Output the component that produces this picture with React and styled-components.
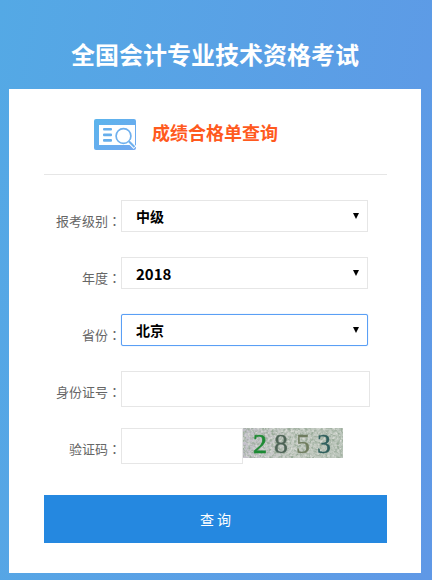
import React from 'react'
import styled, { createGlobalStyle } from 'styled-components'

const GlobalStyle = createGlobalStyle`
  html, body {
    margin: 0;
    padding: 0;
  }
  body {
    font-family: "Noto Sans CJK SC", "Liberation Sans", sans-serif;
  }
`

const Page = styled.div`
  width: 432px;
  height: 580px;
  overflow: hidden;
  background: linear-gradient(100deg, #54a9e5 0%, #5f98e6 100%);
`

const Title = styled.h1`
  margin: 0;
  height: 89px;
  padding: 18px 2px 0 0;
  box-sizing: border-box;
  display: flex;
  align-items: center;
  justify-content: center;
  color: #fff;
  font-size: 24px;
  font-weight: 700;
`

const Card = styled.div`
  margin: 0 11px 0 9px;
  height: 484px;
  padding: 0 34px 0 35px;
  box-sizing: border-box;
  background: #fff;
`

const CardHead = styled.div`
  height: 86px;
  box-sizing: border-box;
  padding: 30px 0 0 50px;
  display: flex;
  align-items: flex-start;
  gap: 16px;
  border-bottom: 1px solid #e6e6e6;
`

const HeadText = styled.h2`
  margin: 0;
  color: #ff5a1e;
  font-size: 18px;
  font-weight: 700;
  line-height: 26px;
`

const Row = styled.div`
  display: flex;
  align-items: flex-start;
  margin-top: ${({ $top }) => $top}px;
`

const Label = styled.label`
  width: 77px;
  flex: none;
  padding: 12px 0 0;
  box-sizing: border-box;
  color: #666;
  font-size: 13px;
  line-height: 18px;
  text-align: right;
  white-space: nowrap;
`

// the colon sits in the middle of its cell in the reference, as in the TC font
const Colon = styled.span`
  font-family: "Noto Sans CJK TC", sans-serif;
`

const SelectWrap = styled.div`
  position: relative;
  width: 247px;
  height: 32px;

  &::after {
    content: '';
    position: absolute;
    right: 9px;
    top: 13px;
    border-left: 3px solid transparent;
    border-right: 3px solid transparent;
    border-top: 6px solid #000;
  }
`

const Select = styled.select`
  appearance: none;
  display: block;
  width: 100%;
  height: 100%;
  margin: 0;
  padding: 0 0 0 14px;
  box-sizing: border-box;
  background: #fff;
  color: #000;
  font-family: inherit;
  font-size: ${({ $size }) => $size}px;
  font-weight: 700;
  outline: none;
  border: 1px solid ${({ $active }) => ($active ? '#5a9ff5' : '#e6e6e6')};
  border-radius: ${({ $active }) => ($active ? '2px' : '0')};
  box-shadow: ${({ $active }) => ($active ? '0 0 1px rgba(90, 159, 245, 0.7)' : 'none')};
`

const Input = styled.input`
  display: block;
  width: ${({ $width }) => $width}px;
  height: 36px;
  margin: 0;
  padding: 0 10px;
  box-sizing: border-box;
  background: #fff;
  border: 1px solid #e6e6e6;
  outline: none;
  font-family: inherit;
  font-size: 14px;
`

const Captcha = styled.svg`
  display: block;
  flex: none;
  width: 100px;
  height: 30px;
`

const SubmitButton = styled.button`
  display: block;
  width: 343px;
  height: 48px;
  margin: 31px 0 0;
  padding: 0;
  border: 0;
  background: #2588e0;
  color: #fff;
  font-family: inherit;
  font-size: 14px;
`

const ReportIcon = () => (
  <svg width="42" height="31" viewBox="0 0 42 31" style={{ flex: 'none' }}>
    <defs>
      <linearGradient id="iconFill" x1="0" y1="0" x2="1" y2="1">
        <stop offset="0" stopColor="#5ab4ec" />
        <stop offset="1" stopColor="#72a8f0" />
      </linearGradient>
    </defs>
    <rect x="0" y="0" width="42" height="31" rx="2" fill="url(#iconFill)" />
    <rect x="5" y="6" width="36" height="20" fill="#fff" />
    <rect x="9" y="9" width="9" height="2.6" rx="1" fill="#66aeec" />
    <rect x="9" y="14.6" width="9" height="2.6" rx="1" fill="#66aeec" />
    <rect x="9" y="20" width="9" height="2.8" rx="1" fill="#66aeec" />
    <circle cx="29.5" cy="17" r="7.4" fill="#fff" stroke="#6fb0ee" strokeWidth="1.7" />
    <path d="M35 22.5 L41 28.5" stroke="#fff" strokeWidth="4" />
    <path d="M34.8 22.3 L40.5 28" stroke="#6fb0ee" strokeWidth="2" />
  </svg>
)

const digits = [
  { ch: '2', x: 10, fill: '#1f8a34', stroke: 0.7 },
  { ch: '8', x: 31, fill: '#4d6355', stroke: 0.3 },
  { ch: '5', x: 53, fill: '#6f7c5e', stroke: 0.3 },
  { ch: '3', x: 74, fill: '#2f5f5c', stroke: 0.4 },
]

const CaptchaImage = () => (
  <Captcha viewBox="0 0 100 30">
    <defs>
      <filter id="darkGrain" x="0" y="0" width="100%" height="100%" colorInterpolationFilters="sRGB">
        <feTurbulence type="fractalNoise" baseFrequency="0.35" numOctaves="2" seed="7" />
        <feColorMatrix values="0 0 0 0 0.6  0 0 0 0 0.67  0 0 0 0 0.6  3 0 0 0 -1.2" />
      </filter>
      <filter id="lightGrain" x="0" y="0" width="100%" height="100%" colorInterpolationFilters="sRGB">
        <feTurbulence type="fractalNoise" baseFrequency="0.4" numOctaves="2" seed="21" />
        <feColorMatrix values="0 0 0 0 0.86  0 0 0 0 0.87  0 0 0 0 0.85  3 0 0 0 -1.5" />
      </filter>
      <filter id="soft">
        <feGaussianBlur stdDeviation="0.5" />
      </filter>
      <linearGradient id="tint" x1="0" y1="0" x2="1" y2="0">
        <stop offset="0" stopColor="#c4c0cb" />
        <stop offset="0.5" stopColor="#c6ccc4" />
        <stop offset="1" stopColor="#bcc6bc" />
      </linearGradient>
    </defs>
    <rect width="100" height="30" fill="url(#tint)" />
    <rect width="100" height="30" filter="url(#darkGrain)" />
    <rect width="100" height="30" filter="url(#lightGrain)" />
    <g filter="url(#soft)" fontFamily="Liberation Serif, serif" fontSize="28">
      {digits.map((d) => (
        <text key={d.ch} x={d.x} y="25" fill={d.fill} stroke={d.fill} strokeWidth={d.stroke}>
          {d.ch}
        </text>
      ))}
    </g>
  </Captcha>
)

const FormSelect = ({ value, options, active, size = 14 }) => (
  <SelectWrap>
    <Select $active={active} $size={size} defaultValue={value}>
      {options.map((o) => (
        <option key={o}>{o}</option>
      ))}
    </Select>
  </SelectWrap>
)

export default function App() {
  return (
    <Page>
      <GlobalStyle />
      <Title>全国会计专业技术资格考试</Title>
      <Card>
        <CardHead>
          <ReportIcon />
          <HeadText>成绩合格单查询</HeadText>
        </CardHead>
        <Row $top={25}>
          <Label>报考级别<Colon>：</Colon></Label>
          <FormSelect value="中级" options={['初级', '中级', '高级']} />
        </Row>
        <Row $top={25}>
          <Label>年度<Colon>：</Colon></Label>
          <FormSelect value="2018" options={['2018', '2017']} size={15} />
        </Row>
        <Row $top={25}>
          <Label>省份<Colon>：</Colon></Label>
          <FormSelect value="北京" options={['北京', '上海', '天津']} active />
        </Row>
        <Row $top={25}>
          <Label>身份证号<Colon>：</Colon></Label>
          <Input $width={249} />
        </Row>
        <Row $top={21}>
          <Label>验证码<Colon>：</Colon></Label>
          <Input $width={122} />
          <CaptchaImage />
        </Row>
        <SubmitButton>查 询</SubmitButton>
      </Card>
    </Page>
  )
}
